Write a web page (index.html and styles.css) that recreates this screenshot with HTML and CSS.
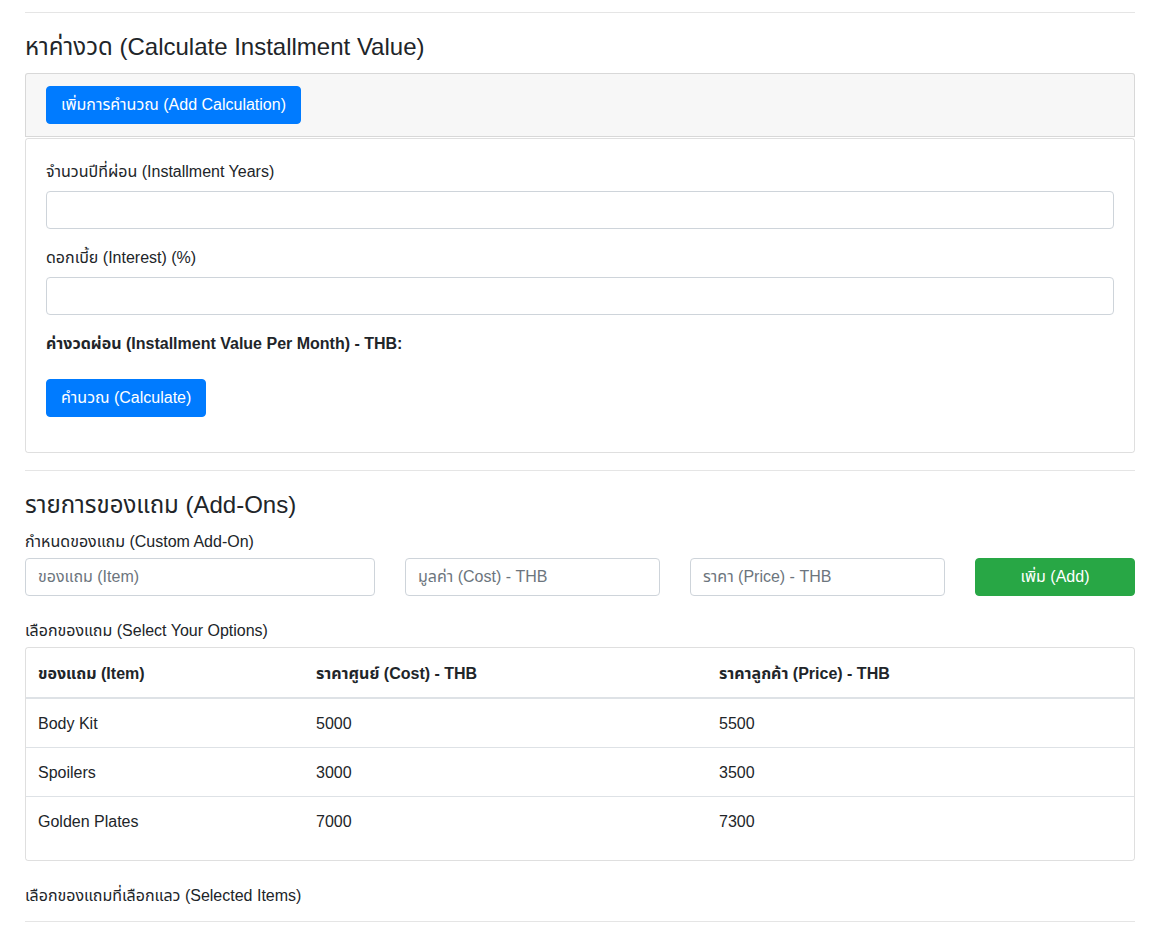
FILE: index.html
```html
<!DOCTYPE html>
<html lang="th">
<head>
<meta charset="utf-8">
<title>Installment</title>
<link rel="stylesheet" href="styles.css">
</head>
<body>
<div class="container">
  <hr class="rule rule-top">
  <h4 class="title">หาค่างวด (Calculate Installment Value)</h4>
  <div class="card-head">
    <button class="btn btn-blue">เพิ่มการคำนวณ (Add Calculation)</button>
  </div>
  <div class="card-body">
    <label class="lbl">จำนวนปีที่ผ่อน (Installment Years)</label>
    <input class="field" type="text">
    <label class="lbl">ดอกเบี้ย (Interest) (%)</label>
    <input class="field" type="text">
    <p class="result">ค่างวดผ่อน (Installment Value Per Month) - THB:</p>
    <button class="btn btn-blue">คำนวณ (Calculate)</button>
  </div>
  <hr class="rule rule-mid">
  <h4 class="title title-2">รายการของแถม (Add-Ons)</h4>
  <div class="sub sub-1">กำหนดของแถม (Custom Add-On)</div>
  <div class="addrow">
    <input class="field f-item" type="text" placeholder="ของแถม (Item)">
    <input class="field f-cost" type="text" placeholder="มูลค่า (Cost) - THB">
    <input class="field f-price" type="text" placeholder="ราคา (Price) - THB">
    <button class="btn btn-green">เพิ่ม (Add)</button>
  </div>
  <div class="sub sub-2">เลือกของแถม (Select Your Options)</div>
  <div class="tablebox">
    <table class="tbl">
      <thead>
        <tr><th class="c1">ของแถม (Item)</th><th class="c2">ราคาศูนย์ (Cost) - THB</th><th>ราคาลูกค้า (Price) - THB</th></tr>
      </thead>
      <tbody>
        <tr><td>Body Kit</td><td>5000</td><td>5500</td></tr>
        <tr><td>Spoilers</td><td>3000</td><td>3500</td></tr>
        <tr><td>Golden Plates</td><td>7000</td><td>7300</td></tr>
      </tbody>
    </table>
  </div>
  <div class="sub sub-3">เลือกของแถมที่เลือกแลว (Selected Items)</div>
  <hr class="rule rule-bot">
</div>
</body>
</html>
```

FILE: styles.css
```css
* { box-sizing: border-box; }
body {
  margin: 0;
  font-family: "Helvetica Neue", "Liberation Sans", Arial, "Noto Sans Thai", "Loma", "Garuda", sans-serif;
  font-size: 16px;
  line-height: 1.5;
  color: #212529;
  background: #fff;
}
.container {
  width: 1110px;
  margin-left: 25px;
  padding-top: 12px;
}
.rule {
  border: 0;
  border-top: 1px solid rgba(0,0,0,.1);
  margin: 0;
}
.title {
  font-size: 24px;
  font-weight: 400;
  line-height: 1.2;
  margin: 20px 0 0;
  height: 40px;
}
.card-head {
  background: #f7f7f7;
  border: 1px solid rgba(0,0,0,.125);
  border-radius: 3px 3px 0 0;
  padding: 12px 20px;
  height: 64px;
}
.card-body {
  margin-top: 1px;
  border: 1px solid rgba(0,0,0,.125);
  border-radius: 3px;
  padding: 20px 20px 35px;
  display: flex;
  flex-direction: column;
  align-items: flex-start;
}
.btn {
  font-family: inherit;
  font-size: 16px;
  line-height: 24px;
  padding: 6px 14px;
  border: 1px solid transparent;
  border-radius: 4px;
  color: #fff;
  height: 38px;
}
.btn-blue { background: #007bff; border-color: #007bff; }
.btn-green { background: #28a745; border-color: #28a745; width: 160px; }
.lbl {
  display: block;
  margin-bottom: 8px;
  height: 24px;
  padding-top: 1px;
}
.field {
  display: block;
  width: 100%;
  height: 38px;
  padding: 6px 12px;
  font-family: inherit;
  font-size: 16px;
  line-height: 24px;
  color: #495057;
  border: 1px solid #ced4da;
  border-radius: 4px;
  background: #fff;
  margin-bottom: 16px;
}
.field::placeholder { color: #6c757d; }
.result {
  font-weight: 700;
  margin: 0 0 24px;
  height: 24px;
  padding-top: 1px;
}
.rule-mid { margin-top: 17px; }
.title-2 { margin-top: 20px; height: 37px; }
.sub {
  font-weight: 400;
  height: 24px;
  line-height: 24px;
  padding-top: 1px;
}
.sub-1 { margin-top: 1px; }
.addrow {
  display: flex;
  gap: 30px;
  margin-top: 5px;
}
.addrow .field { margin: 0; }
.f-item { width: 350px; }
.f-cost { width: 255px; }
.f-price { width: 255px; }
.sub-2 { margin-top: 22px; }
.tablebox {
  margin-top: 5px;
  border: 1px solid rgba(0,0,0,.125);
  border-radius: 3px;
  padding-bottom: 15px;
}
.tbl {
  width: 100%;
  border-collapse: collapse;
}
.tbl th, .tbl td {
  text-align: left;
  padding: 13px 12px 11px;
  line-height: 24px;
  vertical-align: top;
}
.tbl th { font-weight: 700; padding-top: 14px; padding-bottom: 11px; }
.tbl thead th { border-bottom: 2px solid #dee2e6; }
.tbl tbody tr + tr td { border-top: 1px solid #dee2e6; }
.tbl .c1 { width: 278px; }
.tbl .c2 { width: 403px; }
.sub-3 { margin-top: 22px; }
.rule-bot { margin-top: 14px; }
```
